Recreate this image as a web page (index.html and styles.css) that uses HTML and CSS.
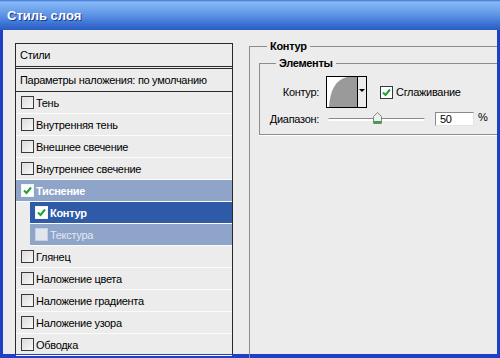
FILE: index.html
```html
<!DOCTYPE html>
<html lang="ru">
<head>
    <meta charset="UTF-8">
    <title>Стиль слоя</title>
    <link rel="stylesheet" href="styles.css">
</head>
<body>

    <div class="window">
        <div class="titlebar">Стиль слоя</div>

        <div class="content">
            <!-- Список стилей слева -->
            <div class="styles-list">
                <div class="list-head">Стили</div>
                <div class="list-blend">Параметры наложения: по умолчанию</div>

                <div class="item"><span class="box"></span>Тень</div>
                <div class="item"><span class="box"></span>Внутренняя тень</div>
                <div class="item"><span class="box"></span>Внешнее свечение</div>
                <div class="item"><span class="box"></span>Внутреннее свечение</div>
                <div class="item active">
                    <span class="box"><svg viewBox="0 0 11 11"><path d="M2 5.5 L4.5 8 L9 2.5" /></svg></span>Тиснение
                </div>
                <div class="item sub selected">
                    <span class="box"><svg viewBox="0 0 11 11"><path d="M2 5.5 L4.5 8 L9 2.5" /></svg></span>Контур
                </div>
                <div class="item sub dim"><span class="box"></span>Текстура</div>
                <div class="item"><span class="box"></span>Глянец</div>
                <div class="item"><span class="box"></span>Наложение цвета</div>
                <div class="item"><span class="box"></span>Наложение градиента</div>
                <div class="item"><span class="box"></span>Наложение узора</div>
                <div class="item"><span class="box"></span>Обводка</div>
            </div>

            <!-- Параметры справа -->
            <div class="panel">
                <fieldset class="group">
                    <legend>Контур</legend>

                    <fieldset class="group inner">
                        <legend>Элементы</legend>

                        <div class="row">
                            <span class="lbl">Контур:</span>
                            <div class="contour">
                                <svg class="curve" viewBox="0 0 30 30">
                                    <path d="M2 30 C3 14 8 3 20 0 L30 0 L30 30 Z" />
                                </svg>
                                <span class="drop"></span>
                            </div>
                            <span class="aa">
                                <span class="box"><svg viewBox="0 0 11 11"><path d="M2 5.5 L4.5 8 L9 2.5" /></svg></span>Сглаживание
                            </span>
                        </div>

                        <div class="row second">
                            <span class="lbl">Диапазон:</span>
                            <div class="slider">
                                <span class="thumb">
                                    <svg viewBox="0 0 9 12">
                                        <polygon points="0.5,4.5 4.5,0.5 8.5,4.5 8.5,11.5 0.5,11.5" fill="#eef0ee" stroke="#7c8a80" />
                                        <rect x="1" y="9" width="7" height="2.5" fill="#3b9d4a" />
                                    </svg>
                                </span>
                            </div>
                            <span class="num">50</span>
                            <span class="pct">%</span>
                        </div>
                    </fieldset>
                </fieldset>
            </div>
        </div>
    </div>

</body>
</html>
```

FILE: styles.css
```css
/* Окно в стиле Windows XP */
body {
    margin: 0;
    font-family: 'Liberation Sans', Arial, sans-serif;
    font-size: 11px;
    letter-spacing: -0.3px;
    color: #000;
}

.window {
    width: 500px;
    height: 358px;
    box-sizing: border-box;
    background: #1f3fc4;
    padding: 0 3px 4px 3px;
    display: flex;
    flex-direction: column;
}

.titlebar {
    height: 30px;
    margin: 0 -3px;
    padding-left: 7px;
    background: linear-gradient(#3d6fd6 0, #86baf6 2px, #74a8ee 8px, #5a90e4 16px, #3b71d2 24px, #2a5cc0 30px);
    color: #fff;
    font-weight: bold;
    font-size: 13px;
    letter-spacing: 0;
    line-height: 32px;
    text-shadow: 1px 1px 0 #1a3a8a;
}

.content {
    flex: 1;
    background: #ececec;
    display: flex;
    min-height: 0;
}

/* Список стилей */
.styles-list {
    width: 218px;
    box-sizing: border-box;
    margin: 13px 0 0 12px;
    border: 1px solid #2a2a2a;
    border-bottom: none;
}

.list-head,
.list-blend {
    height: 22px;
    line-height: 22px;
    padding-left: 4px;
}

.list-head {
    border-bottom: 3px double #2a2a2a;
}

.list-blend {
    border-bottom: 1px solid #2a2a2a;
}

.item {
    height: 21px;
    border-bottom: 1px solid #fbfbfb;
    display: flex;
    align-items: center;
    padding-left: 5px;
}

.box {
    width: 11px;
    height: 11px;
    border: 1px solid #3a3a3a;
    background: linear-gradient(135deg, #dcdcdc, #f8f8f8);
    margin-right: 2px;
    display: flex;
}

.box svg {
    width: 11px;
    height: 11px;
    fill: none;
    stroke: #22a030;
    stroke-width: 2;
}

.item.active {
    background: #8ea5c9;
    color: #fff;
    font-weight: bold;
}

.item.active .box,
.item.selected .box {
    background: #fff;
    border-color: #f4f4f4;
}

.item.sub {
    margin-left: 14px;
}

.item.selected {
    background: #2f5aa8;
    color: #fff;
    font-weight: bold;
}

.item.dim {
    background: #8ea5c9;
    color: #e2e8f2;
}

.item.dim .box {
    background: #e0e5ee;
    border-color: #c8d0de;
}

/* Правая панель */
.panel {
    flex: 1;
    margin-left: 16px;
}

.group {
    margin: 10px 0 0 0;
    padding: 4px 0 0 9px;
    min-width: 0;
    border: 1px solid #8d8d8d;
    border-right: none;
    border-bottom: none;
    height: 100%;
    box-sizing: border-box;
}

.group legend {
    font-weight: bold;
    line-height: 13px;
    padding: 0 3px;
    margin-left: 8px;
}

.group.inner {
    margin-top: 0;
    height: auto;
    padding: 6px 0 8px 0;
    border-bottom: 1px solid #8d8d8d;
    box-shadow: 0 1px 0 #fff;
}

.group.inner legend {
    margin-left: 16px;
}

.row {
    display: flex;
    align-items: center;
    height: 32px;
}

.row.second {
    height: 14px;
    margin-top: 4px;
}

.lbl {
    width: 59px;
    text-align: right;
}

.contour {
    margin-left: 7px;
    width: 39px;
    height: 30px;
    border: 1px solid #000;
    display: flex;
    background: #fff;
}

.curve {
    width: 30px;
    height: 30px;
    fill: #9a9a9a;
}

.drop {
    flex: 1;
    border-left: 1px solid #000;
    background: #ececec;
    display: flex;
    align-items: center;
    justify-content: center;
    padding-bottom: 4px;
}

.drop::after {
    content: "";
    border-left: 3px solid transparent;
    border-right: 3px solid transparent;
    border-top: 3px solid #000;
}

.aa {
    margin-left: 13px;
    display: flex;
    align-items: center;
}

.aa .box {
    border-color: #2a3a4a;
    background: #fff;
    margin-right: 3px;
}

.slider {
    position: relative;
    margin-left: 9px;
    width: 97px;
    height: 2px;
    border-top: 1px solid #8a8a8a;
    border-radius: 2px;
    background: #fff;
}

.thumb {
    position: absolute;
    left: 45px;
    top: -7px;
    width: 9px;
    height: 12px;
}

.thumb svg {
    display: block;
    width: 9px;
    height: 12px;
}

.num {
    margin-left: 10px;
    width: 33px;
    height: 12px;
    line-height: 12px;
    padding-left: 4px;
    background: #fff;
    border: 1px solid;
    border-color: #8a8a8a #e4e4e4 #e4e4e4 #8a8a8a;
}

.pct {
    margin-left: 4px;
    margin-top: -4px;
}
```
